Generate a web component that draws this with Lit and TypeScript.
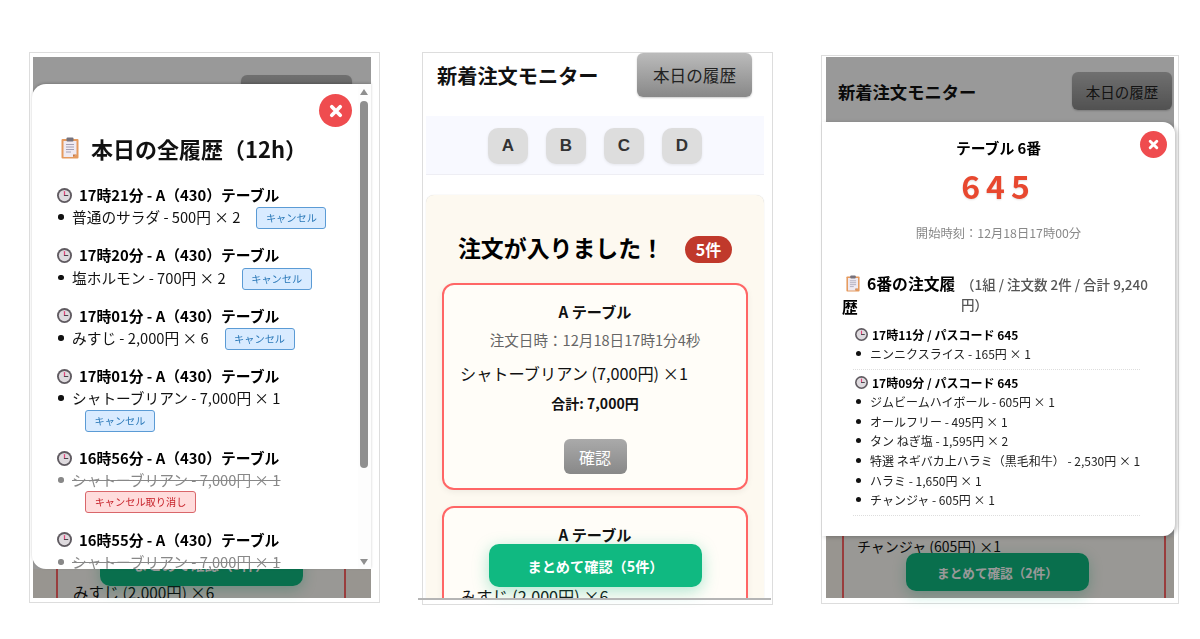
import { LitElement, html, css, svg } from "lit";
import { customElement } from "lit/decorators.js";

const clock = (size: number) => html`<svg class="ico" width=${size} height=${size} viewBox="0 0 32 32">
  ${svg`<circle cx="16" cy="16" r="16" fill="#5f5a60"/><circle cx="16" cy="16" r="12" fill="#dedade"/>
  <path d="M16 7.5v8.5" stroke="#e0457a" stroke-width="2.6" stroke-linecap="round"/><path d="M16 16h7" stroke="#4c474e" stroke-width="2.6" stroke-linecap="round"/>`}
</svg>`;

const clipboard = (w: number, h: number) => html`<svg class="ico" width=${w} height=${h} viewBox="0 0 36 44">
  ${svg`<rect x="1" y="4" width="34" height="39" rx="2" fill="#e59a5e"/>
  <path d="M5 8h26v27l-7 5H5z" fill="#efeaf2"/><path d="M31 35l-7 5v-5z" fill="#c9783f"/>
  <rect x="11" y="1" width="14" height="8" rx="2" fill="#76727c"/>
  <path d="M10 15h16M10 20h16M10 25h16M10 30h10" stroke="#a4a0b4" stroke-width="2"/>`}
</svg>`;

const xMark = (size: number) => html`<svg width=${size} height=${size} viewBox="0 0 12 12">
  ${svg`<path d="M2.4 2.4l7.2 7.2M9.6 2.4l-7.2 7.2" stroke="#fff" stroke-width="3.2" stroke-linecap="round"/>`}
</svg>`;

type AllItem = { time: string; item: string; wrap?: boolean; cancelled?: boolean };
const allHistory: AllItem[] = [
  { time: "17時21分", item: "普通のサラダ - 500円 × 2" },
  { time: "17時20分", item: "塩ホルモン - 700円 × 2" },
  { time: "17時01分", item: "みすじ - 2,000円 × 6" },
  { time: "17時01分", item: "シャトーブリアン - 7,000円 × 1", wrap: true },
  { time: "16時56分", item: "シャトーブリアン - 7,000円 × 1", wrap: true, cancelled: true },
  { time: "16時55分", item: "シャトーブリアン - 7,000円 × 1", wrap: true, cancelled: true },
];

const tableHistory = [
  { time: "17時11分 / パスコード 645", items: ["ニンニクスライス - 165円 × 1"] },
  {
    time: "17時09分 / パスコード 645",
    items: [
      "ジムビームハイボール - 605円 × 1",
      "オールフリー - 495円 × 1",
      "タン ねぎ塩 - 1,595円 × 2",
      "特選 ネギバカ上ハラミ（黒毛和牛） - 2,530円 × 1",
      "ハラミ - 1,650円 × 1",
      "チャンジャ - 605円 × 1",
    ],
  },
];

@customElement("app-root")
export class AppRoot extends LitElement {
  static styles = css`
    :host {
      display: block;
      width: 1200px;
      height: 639px;
      background: #fff;
      font-family: "Noto Sans CJK JP", "Noto Sans", sans-serif;
      color: #111;
      overflow: hidden;
    }
    * { box-sizing: border-box; }
    .page { display: flex; align-items: flex-start; padding-left: 29px; }
    .frame { border: 1px solid #ddd; background: #fff; flex: none; }
    .f1 { width: 351px; height: 551px; margin-top: 52px; padding: 4px 8px 4px 3px; }
    .f2 { width: 351px; height: 553px; margin: 52px 0 0 42px; padding: 0 8px 6px 3px; position: relative; }
    .f3 { width: 358px; height: 549px; margin: 55px 0 0 48px; padding: 1px 4px 5px 4px; }
    .screen { position: relative; height: 100%; display: flex; flex-direction: column; background: #fff; }
    .clip { position: absolute; inset: 0; overflow: hidden; display: flex; flex-direction: column; justify-content: space-between; background: #fff; }

    .hdr { display: flex; justify-content: space-between; align-items: center; flex: none; }
    .hdr h1 { margin: 0; font-weight: 700; }
    .hbtn { background: linear-gradient(#bbb, #888); border: none; border-radius: 6px; color: #222; display: flex; align-items: center; justify-content: center; box-shadow: 0 1px 2px rgba(0,0,0,.2); }
    .f1 .hdr { padding: 18px 19px 0 0; }
    .f1 .hbtn { width: 111px; height: 36px; }
    .f3 .hdr { padding: 15px 2px 0 12px; }
    .f3 .hdr h1 { font-size: 17.3px; }
    .f3 .hbtn { width: 100px; height: 38px; font-size: 14.5px; }

    .under { background: #fdf9f0; flex: none; position: relative; }
    .f1 .under { height: 29px; padding: 0 25px 0 23px; }
    .f3 .under { height: 62px; padding: 0 8px 0 16px; }
    .undercard { height: 100%; background: #fffdf8; border-left: 2px solid #f66; border-right: 2px solid #f66; overflow: hidden; color: #111; white-space: nowrap; }
    .f1 .undercard { padding: 12px 0 0 15px; font-size: 15.4px; }
    .f3 .undercard { padding: 0 0 0 13px; line-height: 21px; font-size: 14px; }
    .float { position: absolute; background: #10b981; border-radius: 10px; color: #fff; font-weight: 700; display: flex; align-items: center; justify-content: center; box-shadow: 0 4px 14px rgba(16,185,129,.3); }
    .f1 .float { left: 67px; bottom: 12px; width: 203px; height: 44px; font-size: 14.2px; }
    .f3 .float { left: 80px; bottom: 7px; width: 183px; height: 38px; font-size: 12.6px; }
    .scrim { position: absolute; inset: 0; background: rgba(0,0,0,.4); backdrop-filter: blur(.6px); }

    .modal { position: absolute; background: #fff; overflow: hidden; }
    .close { position: absolute; border-radius: 50%; background: #ef4c4f; display: flex; align-items: center; justify-content: center; }
    .ico { flex: none; display: block; }

    .m1 { left: -1px; top: 27px; width: 339px; height: 485px; border-radius: 14px 0 0 14px; box-shadow: 0 -1px 3px rgba(0,0,0,.2); }
    .m1 .close { left: 287px; top: 10px; width: 33px; height: 33px; }
    .m1 .body { padding: 49px 20px 0 25px; height: 100%; overflow: hidden; }
    .m1 h2 { margin: 0 0 21px 4px; font-size: 22px; line-height: 30px; font-weight: 700; display: flex; align-items: center; gap: 12px; }
    .grp { margin-bottom: 16px; }
    .ghead { display: flex; align-items: center; gap: 7px; font-size: 14.8px; font-weight: 700; line-height: 22.2px; color: #000; }
    .gitem { display: flex; font-size: 14.7px; line-height: 22.2px; position: relative; padding-left: 15px; flex-wrap: wrap; align-items: center; }
    .gitem::before { content: ""; position: absolute; left: 1px; top: 8px; width: 5.5px; height: 5.5px; border-radius: 50%; background: #111; }
    .gitem.off { color: #888; }
    .gitem.off::before { background: #888; }
    .gitem.off .txt { text-decoration: line-through; }
    .cancel { font-size: 10.2px; line-height: 1; height: 22px; width: 70px; margin: 1px 0 -1px 16px; padding: 0; border-radius: 3px; border: 1px solid #5b9bd5; background: #d9ebff; color: #2a78b8; display: flex; align-items: center; justify-content: center; }
    .break { flex-basis: 100%; height: 0; }
    .gitem .cancel.below { margin: 0 0 -.6px 13px; }
    .cancel.undo { width: 111px; border-color: #d9666a; background: #ffdcdc; color: #c7222a; }
    .sb { position: absolute; right: 0; top: 0; bottom: 0; width: 13px; background: #fdfdfd; }
    .thumb { position: absolute; left: 2px; top: 17px; width: 8px; height: 367px; border-radius: 4px; background: #8f8f8f; }
    .arr { position: absolute; left: 1.5px; width: 0; height: 0; border-left: 4.5px solid transparent; border-right: 4.5px solid transparent; }
    .arr.up { top: 5px; border-bottom: 6px solid #8f8f8f; }
    .arr.dn { bottom: 4px; border-top: 6px solid #8f8f8f; }

    .f2 .hdr { padding: 0 12px 0 11px; }
    .f2 .hdr h1 { font-size: 20.2px; }
    .f2 .hbtn { width: 115px; height: 44px; font-size: 16.6px; }
    .tabs { margin-top: 19px; height: 59px; background: #f8f9ff; border-bottom: 1px solid #eeeef4; display: flex; justify-content: center; gap: 18px; padding-top: 12px; flex: none; }
    .tab { width: 40px; height: 36px; border-radius: 10px; background: #ddd; font-family: "Liberation Sans", Arial, sans-serif; font-weight: 700; font-size: 17px; color: #333; display: flex; align-items: center; justify-content: center; box-shadow: 0 1px 3px rgba(0,0,0,.08); }
    .panel { margin-top: 20px; padding: 36px 16px 0; background: #fdf9f0; border-radius: 8px 8px 0 0; box-shadow: 0 0 1px rgba(0,0,0,.2); flex: 1; overflow: hidden; min-height: 0; }
    .ptitle { display: flex; justify-content: center; align-items: center; gap: 21px; height: 36px; margin-bottom: 16px; font-size: 22.9px; font-weight: 700; color: #000; }
    .ptitle span:first-child { margin-top: -4px; }
    .badge { background: #c0392b; color: #fff; font-size: 16px; border-radius: 14px; width: 47px; height: 27px; display: flex; align-items: center; justify-content: center; }
    .card { border: 2px solid #f66; border-radius: 12px; background: #fffdf8; height: 207px; margin-bottom: 16px; padding: 14px 16px 0; text-align: center; box-shadow: 0 2px 6px rgba(0,0,0,.06); }
    .ctitle { font-size: 15.2px; font-weight: 700; line-height: 24px; }
    .cdate { font-size: 14.6px; color: #666; line-height: 24px; margin-top: 5px; }
    .citem { font-size: 16.2px; line-height: 26px; text-align: left; margin-top: 8px; white-space: nowrap; }
    .ctotal { font-size: 14px; font-weight: 700; line-height: 22px; margin-top: 6px; }
    .cbtn { display: inline-flex; width: 63px; height: 35px; margin-top: 25px; align-items: center; justify-content: center; border-radius: 6px; background: linear-gradient(#aaa, #888); color: #fff; font-size: 16px; }
    .f2 .float { left: 63px; top: 491px; width: 213px; height: 43px; font-size: 14.2px; box-shadow: 0 4px 16px rgba(16,185,129,.35); }
    .rule { position: absolute; left: -8px; top: 545px; width: 353px; height: 2px; background: #b5b5b5; }

    .m3 { left: -4px; top: 65px; width: 353px; height: 414px; border-radius: 0 12px 12px 0; box-shadow: 2px 1px 4px rgba(0,0,0,.25); }
    .m3 .close { left: 318px; top: 9px; width: 27px; height: 27px; }
    .m3 .body { padding: 14px 20px 0 20px; }
    .ttl { text-align: center; font-size: 14.8px; font-weight: 700; line-height: 24px; color: #000; }
    .pass { text-align: center; font-size: 32px; font-weight: 700; color: #e8482f; letter-spacing: 6px; line-height: 40px; margin-top: 5px; text-shadow: 0 1px 2px rgba(0,0,0,.12); }
    .start { text-align: center; font-size: 12.3px; color: #888; line-height: 20px; margin-top: 18px; }
    .sect { display: flex; margin-top: 29px; }
    .sect h3 { margin: 0; width: 119px; font-size: 15.8px; line-height: 23px; font-weight: 700; flex: none; color: #000; }
    .sect h3 svg { display: inline-block; vertical-align: -2px; margin: 0 7px 0 4px; }
    .sect .sum { font-size: 13.5px; color: #555; line-height: 20px; font-weight: 500; margin-top: 2px; }
    .th { margin: 3px 15px 0 11px; padding-bottom: 4.5px; border-bottom: 1px dotted #ddd; }
    .sect + .th { margin-top: 7px; }
    .thead { display: flex; align-items: center; gap: 4px; font-size: 12px; font-weight: 700; line-height: 19.3px; padding-left: 2px; color: #000; }
    .titem { position: relative; padding-left: 17px; font-size: 12px; line-height: 19.7px; color: #222; white-space: nowrap; }
    .titem::before { content: ""; position: absolute; left: 3px; top: 7px; width: 5px; height: 5px; border-radius: 50%; background: #111; }
  `;

  private renderAll(g: AllItem) {
    const cancel = g.cancelled ? "キャンセル取り消し" : "キャンセル";
    return html`<div class="grp">
      <div class="ghead">${clock(15)}<span>${g.time} - A（430）テーブル</span></div>
      <div class="gitem ${g.cancelled ? "off" : ""}">
        <span class="txt">${g.item}</span>
        ${g.wrap
          ? html`<span class="break"></span><span class="cancel below ${g.cancelled ? "undo" : ""}">${cancel}</span>`
          : html`<span class="cancel">${cancel}</span>`}
      </div>
    </div>`;
  }

  render() {
    return html`<div class="page">
      <section class="frame f1">
        <div class="screen">
          <div class="clip">
            <div class="hdr"><span></span><div class="hbtn"></div></div>
            <div class="under"><div class="undercard">みすじ (2,000円) ×6</div></div>
          </div>
          <div class="float">まとめて確認（5件）</div>
          <div class="scrim"></div>
          <div class="modal m1">
            <div class="body">
              <h2>${clipboard(18, 22)}<span>本日の全履歴（12h）</span></h2>
              ${allHistory.map((g) => this.renderAll(g))}
            </div>
            <div class="sb"><div class="arr up"></div><div class="thumb"></div><div class="arr dn"></div></div>
            <div class="close">${xMark(14)}</div>
          </div>
        </div>
      </section>

      <section class="frame f2">
        <div class="screen">
          <div class="hdr"><h1>新着注文モニター</h1><div class="hbtn">本日の履歴</div></div>
          <div class="tabs">${["A", "B", "C", "D"].map((t) => html`<div class="tab">${t}</div>`)}</div>
          <div class="panel">
            <div class="ptitle"><span>注文が入りました！</span><span class="badge">5件</span></div>
            <div class="card">
              <div class="ctitle">A テーブル</div>
              <div class="cdate">注文日時：12月18日17時1分4秒</div>
              <div class="citem">シャトーブリアン (7,000円) ×1</div>
              <div class="ctotal">合計: 7,000円</div>
              <div class="cbtn">確認</div>
            </div>
            <div class="card">
              <div class="ctitle">A テーブル</div>
              <div class="cdate">注文日時：12月18日17時1分4秒</div>
              <div class="citem">みすじ (2,000円) ×6</div>
            </div>
          </div>
          <div class="float">まとめて確認（5件）</div>
          <div class="rule"></div>
        </div>
      </section>

      <section class="frame f3">
        <div class="screen">
          <div class="clip">
            <div class="hdr"><h1>新着注文モニター</h1><div class="hbtn">本日の履歴</div></div>
            <div class="under"><div class="undercard">チャンジャ (605円) ×1</div></div>
          </div>
          <div class="float">まとめて確認（2件）</div>
          <div class="scrim"></div>
          <div class="modal m3">
            <div class="body">
              <div class="ttl">テーブル 6番</div>
              <div class="pass">645</div>
              <div class="start">開始時刻：12月18日17時00分</div>
              <div class="sect">
                <h3>${clipboard(14, 17)}6番の注文履歴</h3>
                <div class="sum">（1組 / 注文数 2件 / 合計 9,240円）</div>
              </div>
              ${tableHistory.map(
                (t) => html`<div class="th">
                  <div class="thead">${clock(13)}<span>${t.time}</span></div>
                  ${t.items.map((i) => html`<div class="titem">${i}</div>`)}
                </div>`
              )}
            </div>
            <div class="close">${xMark(11)}</div>
          </div>
        </div>
      </section>
    </div>`;
  }
}
